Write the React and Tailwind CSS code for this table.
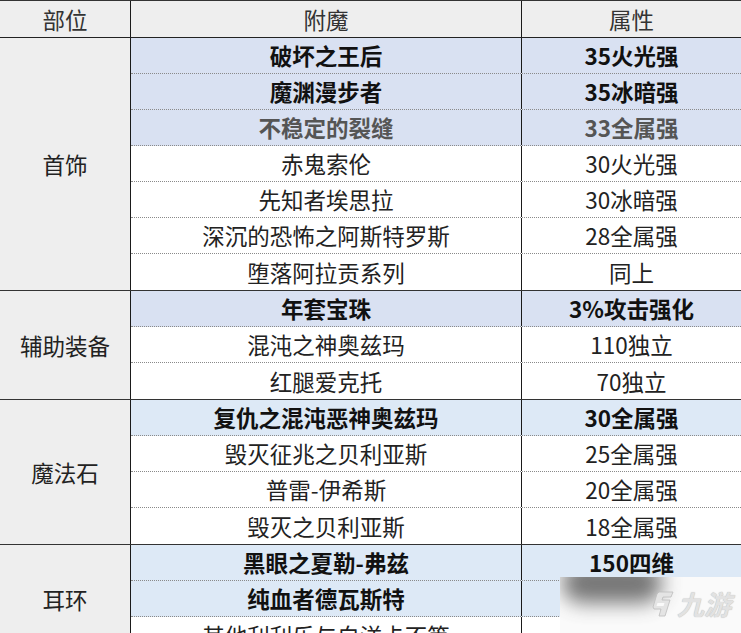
import React from "react";

const BLUEGRAY = "bg-[#d9e1f2]";
const LIGHTBLUE = "bg-[#dde9f6]";

const groups = [
  {
    name: "首饰",
    rows: [
      { a: "破坏之王后", b: "35火光强", bg: BLUEGRAY, bold: true },
      { a: "魔渊漫步者", b: "35冰暗强", bg: BLUEGRAY, bold: true },
      { a: "不稳定的裂缝", b: "33全属强", bg: BLUEGRAY, bold: true, gray: true },
      { a: "赤鬼索伦", b: "30火光强" },
      { a: "先知者埃思拉", b: "30冰暗强" },
      { a: "深沉的恐怖之阿斯特罗斯", b: "28全属强" },
      { a: "堕落阿拉贡系列", b: "同上" },
    ],
  },
  {
    name: "辅助装备",
    rows: [
      { a: "年套宝珠", b: "3%攻击强化", bg: BLUEGRAY, bold: true },
      { a: "混沌之神奥兹玛", b: "110独立" },
      { a: "红腿爱克托", b: "70独立" },
    ],
  },
  {
    name: "魔法石",
    rows: [
      { a: "复仇之混沌恶神奥兹玛", b: "30全属强", bg: LIGHTBLUE, bold: true },
      { a: "毁灭征兆之贝利亚斯", b: "25全属强" },
      { a: "普雷-伊希斯", b: "20全属强" },
      { a: "毁灭之贝利亚斯", b: "18全属强" },
    ],
  },
  {
    name: "耳环",
    rows: [
      { a: "黑眼之夏勒-弗兹", b: "150四维", bg: LIGHTBLUE, bold: true },
      { a: "纯血者德瓦斯特", b: "", bg: LIGHTBLUE, bold: true },
      { a: "其他利利乐与白洋卡不等", b: "" },
    ],
  },
];

function Row({ r, last }) {
  const txt = r.gray
    ? "text-[#555] font-bold"
    : r.bold
    ? "text-[#111] font-bold"
    : "text-[#222]";
  const border = last ? "" : "border-b border-dotted border-[#8a8a8a]";
  return (
    <div className={`flex h-[36px] shrink-0 ${r.bg || "bg-white"} ${border}`}>
      <div className={`w-[391px] shrink-0 flex items-center justify-center border-r border-[#1a1a1a] ${txt}`}>
        {r.a}
      </div>
      <div className={`flex-1 flex items-center justify-center ${txt}`}>{r.b}</div>
    </div>
  );
}

export default function App() {
  return (
    <div
      className="relative w-[741px] h-[633px] overflow-hidden bg-white text-[22.5px] leading-none"
      style={{ fontFamily: '"Noto Sans CJK SC", "Noto Sans", sans-serif' }}
    >
      <div className="border-t border-[#333]">
        <div className="flex h-[37px] bg-[#eeeeee] border-b border-[#222] text-[#333]">
          <div className="w-[131px] shrink-0 flex items-center justify-center border-r border-[#1a1a1a]">部位</div>
          <div className="w-[391px] shrink-0 flex items-center justify-center border-r border-[#1a1a1a]">附魔</div>
          <div className="flex-1 flex items-center justify-center">属性</div>
        </div>
        {groups.map((g, gi) => (
          <div key={gi} className="flex border-b border-[#333]">
            <div className="w-[131px] shrink-0 bg-[#eeeeee] flex items-center justify-center border-r border-[#1a1a1a] text-[#222]">
              {g.name}
            </div>
            <div className="flex-1 flex flex-col">
              {g.rows.map((r, ri) => (
                <Row key={ri} r={r} last={ri === g.rows.length - 1} />
              ))}
            </div>
          </div>
        ))}
      </div>

      {/* watermark */}
      <div className="absolute left-[560px] top-[577px] w-[181px] h-[56px] bg-[#fafafa] overflow-hidden">
        <div className="absolute left-[2px] top-[-14px] w-[100px] h-[40px] rounded-full bg-[#555] opacity-80 blur-[10px]" />
        <div className="absolute left-[92px] top-[13px] flex items-center gap-[3px]">
          <svg width="22" height="26" viewBox="0 0 22 26">
            <path
              d="M7 1 L21 1 L19 6 L11 6 L10 9 L18 9 L13 25 L7 25 L9 18 L2 18 L1 16 L5 3 Z"
              fill="#e4e4e4"
              stroke="#bdbdbd"
              strokeWidth="0.8"
            />
            <path d="M5.5 12 L12.5 12 L11.5 15 L4.5 15 Z" fill="#fafafa" />
          </svg>
          <span className="text-[27px] leading-none italic font-bold text-[#e2e2e2] [text-shadow:0_0_1px_#aaa]">九游</span>
        </div>
      </div>
    </div>
  );
}
